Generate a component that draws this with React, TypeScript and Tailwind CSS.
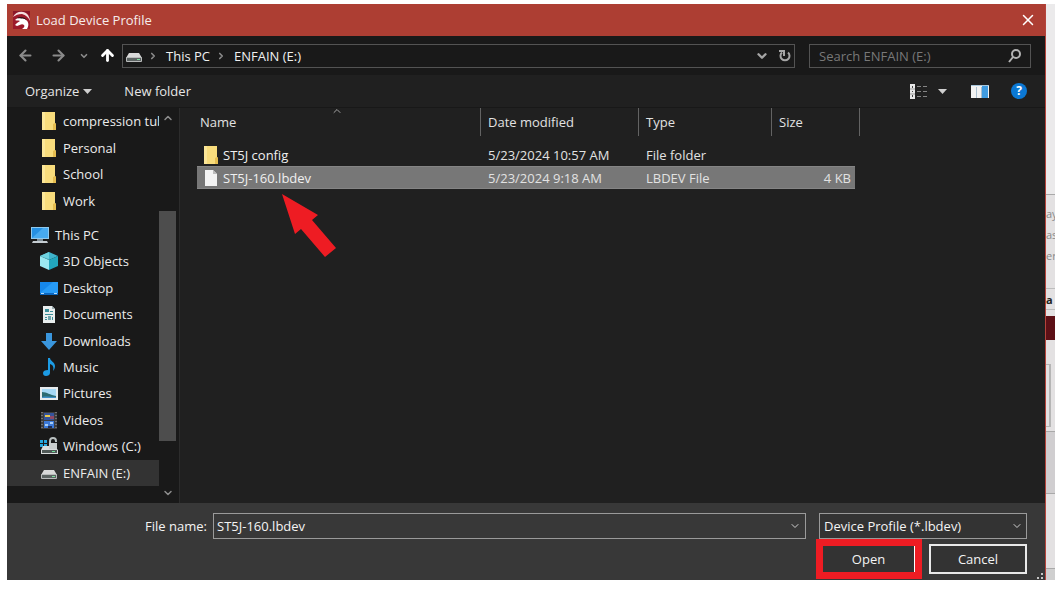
import type { ReactNode } from "react";
import { ArrowLeft, ArrowRight, ArrowUp, ChevronDown, ChevronRight, ChevronUp, X } from "lucide-react";

/* Icons */

function LogoIcon() {
  return (
    <svg width="17" height="18" viewBox="0 0 17 18">
      <rect width="17" height="18" fill="#9c1a2b" />
      <path d="M0 0h17v4L12 1H5L0 4z" fill="#8a1828" />
      <path d="M0 6C3 0 11-1 15 4c1 2 2 4 2 6-2-4-4-6-8-7-4 0-6 1-9 3z" fill="#f3dede" />
      <path d="M2 9c3-3 8-3 11 0 3 2 3 6 1 9H9c2-1 3-3 2-4-2-2-4 0-7 1l-2-1 2-2 3-2c-2-1-3 0-5-1z" fill="#fff" />
      <path d="M4 7c3-2 8-1 10 2-3-2-6-1-10-2z" fill="#2b1215" />
    </svg>
  );
}

function DriveIcon() {
  return (
    <svg width="16" height="16" viewBox="0 0 16 16">
      <path d="M3 5h10l3 5H0z" fill="#d9d9d9" />
      <rect y="9" width="16" height="5" rx="1" fill="#b9bbbb" />
      <rect x="1" y="10" width="14" height="3" fill="#5c6362" />
      <rect x="11" y="11" width="3" height="1" fill="#7fe0a0" />
    </svg>
  );
}

function FolderIcon() {
  return (
    <svg width="16" height="18" viewBox="0 0 16 18">
      <path d="M1 0h13v11l1 1v6H1z" fill="#f8dc7c" />
      <path d="M1 0h3v18H1z" fill="#fbe698" />
      <path d="M12 12l2-1 1 1v6h-3z" fill="#e5bd50" />
    </svg>
  );
}

function FileIcon() {
  return (
    <svg width="16" height="18" viewBox="0 0 16 18">
      <path d="M2 1h8l4 4v12H2z" fill="#f4f4f4" />
      <path d="M10 1l4 4h-4z" fill="#bdbdbd" />
    </svg>
  );
}

function PcIcon() {
  return (
    <svg width="18" height="18" viewBox="0 0 18 18">
      <rect width="18" height="12" y="1" fill="#8fc9ee" />
      <rect x="1" y="2" width="16" height="10" fill="#2590e3" />
      <path d="M1 12L12 2h5v10z" fill="#47aaf0" />
      <rect x="6" y="13" width="6" height="2" fill="#7d8b94" />
      <path d="M2 15h14l1 2H1z" fill="#c4ccd1" />
    </svg>
  );
}

function CubeIcon() {
  return (
    <svg width="18" height="18" viewBox="0 0 18 18">
      <path d="M9 0l9 4-9 4-9-4z" fill="#3eb3cb" />
      <path d="M0 4l9 4v10l-9-4z" fill="#9be9f1" />
      <path d="M18 4L9 8v10l9-4z" fill="#22a6bd" />
      <path d="M0 4l9-4v7z" fill="#6fd3e0" />
    </svg>
  );
}

function DesktopIcon() {
  return (
    <svg width="18" height="18" viewBox="0 0 18 18">
      <rect y="3" width="18" height="13" fill="#1687ea" />
      <path d="M0 14L13 3h5v11z" fill="#279bf6" />
      <path d="M0 14h18v2H0z" fill="#0b66be" />
      <path d="M1 14h3v1H1zM14 14h3v1h-3z" fill="#b6dcfb" />
    </svg>
  );
}

function DocumentIcon() {
  return (
    <svg width="18" height="18" viewBox="0 0 18 18">
      <path d="M3 1h9l3 3v14H3z" fill="#e9eeee" />
      <path d="M12 1l3 3h-3z" fill="#9fb0b3" />
      <path d="M5 4h4v3H5zM10 6h3v1h-3zM5 9h8v1H5zM5 12h2v1H5zM5 14h2v1H5zM12 12h1v3h-1z" fill="#3b8e99" />
      <rect x="8" y="11" width="3" height="4" fill="#6fa6ae" />
    </svg>
  );
}

function DownloadIcon() {
  return (
    <svg width="18" height="18" viewBox="0 0 18 18">
      <path d="M6 1h6v8h5l-8 9-8-9h5z" fill="#3a96dd" />
    </svg>
  );
}

function MusicIcon() {
  return (
    <svg width="18" height="18" viewBox="0 0 18 18">
      <path d="M8 0h2c0 3 5 4 5 8 0 2-1 4-2 5 1-4 0-6-3-7v9c0 2-2 3-4 3s-3-1-3-3 2-3 5-3z" fill="#1c9be4" />
    </svg>
  );
}

function PictureIcon() {
  return (
    <svg width="18" height="18" viewBox="0 0 18 18">
      <rect y="3" width="18" height="13" fill="#e6eaec" />
      <rect x="2" y="5" width="14" height="9" fill="#a5d8f5" />
      <path d="M2 8c5 0 8 3 14 4v2H2z" fill="#2c6b72" />
      <path d="M2 13c5-1 9 0 14 0v1H2z" fill="#3d8fc7" />
    </svg>
  );
}

function VideoIcon() {
  return (
    <svg width="18" height="18" viewBox="0 0 18 18">
      <rect x="1" y="1" width="16" height="17" fill="#3d3d3f" />
      <path d="M2 1v17M16 1v17" stroke="#a5a5a5" strokeWidth="1" strokeDasharray="1 2" />
      <rect x="4" y="2" width="10" height="7" fill="#35549c" />
      <path d="M5 4h5v2H5z" fill="#e8c84f" />
      <path d="M10 5h4v3h-4z" fill="#8f4a67" />
      <rect x="4" y="10" width="10" height="7" fill="#3c79d8" />
      <path d="M5 13h3v2H5zM10 11h3v2h-3z" fill="#a8cdf5" />
      <path d="M8 15h4v2H8z" fill="#1f2f56" />
    </svg>
  );
}

function LockedDriveIcon() {
  return (
    <svg width="18" height="18" viewBox="0 0 18 18">
      <path d="M0 3h3v3H0zM4 3h3v3H4zM0 7h3v3H0zM4 7h3v3H4z" fill="#25a6dd" />
      <path d="M10 6V4c0-4 6-4 6 0v1" fill="none" stroke="#b9c0c0" strokeWidth="2" />
      <rect x="9" y="6" width="8" height="6" fill="#c9cdcd" />
      <path d="M3 9h6v3h8l1 1v4H1v-4z" fill="#d9dcdc" />
      <rect x="2" y="13" width="15" height="3" fill="#4f5856" />
      <rect x="12" y="14" width="3" height="1" fill="#71e09a" />
    </svg>
  );
}

function RefreshIcon() {
  return (
    <svg width="12" height="13" viewBox="0 0 12 13" fill="none" stroke="currentColor" strokeWidth="2">
      <path d="M9 3.500A4.500 4.500 0 1 1 3 3.500" />
      <path d="M0 2h5v5" />
    </svg>
  );
}

function SearchIcon() {
  return (
    <svg width="14" height="14" viewBox="0 0 14 14" fill="none" stroke="#b4b4b4" strokeWidth="2">
      <circle cx="8" cy="5" r="4" />
      <path d="M5 8l-4 5" />
    </svg>
  );
}

function ViewIcon() {
  return (
    <svg width="18" height="15" viewBox="0 0 18 15">
      <rect width="5" height="15" fill="#e8e8e8" />
      <path d="M2 2h1v2H2zM2 7h1v1H2zM2 11h1v2H2z" fill="#444" />
      <path d="M0 5h5M0 10h5" stroke="#999" />
      <path d="M7 2.500h4M13 2.500h4M7 7.500h4M13 7.500h4M7 12.500h4M13 12.500h4" stroke="#858585" />
    </svg>
  );
}

function PreviewPaneIcon() {
  return (
    <svg width="18" height="13" viewBox="0 0 18 13">
      <rect width="18" height="13" fill="#f2f2f2" />
      <rect x="11" y="1" width="6" height="12" fill="#3f9be0" />
      <path d="M5.500 2v11M10.500 2v11" stroke="#a9bfd0" />
      <path d="M0 .5h18" stroke="#a8c6dc" />
    </svg>
  );
}

function CaretIcon() {
  return (
    <svg width="9" height="5" viewBox="0 0 9 5">
      <path d="M0 0h9L4.500 5z" fill="#cfcfcf" />
    </svg>
  );
}

/* Data */

type Place = { name: string; icon: ReactNode; selected?: boolean };

const folders = ["compression tub", "Personal", "School", "Work"];

const places: Place[] = [
  { name: "3D Objects", icon: <CubeIcon /> },
  { name: "Desktop", icon: <DesktopIcon /> },
  { name: "Documents", icon: <DocumentIcon /> },
  { name: "Downloads", icon: <DownloadIcon /> },
  { name: "Music", icon: <MusicIcon /> },
  { name: "Pictures", icon: <PictureIcon /> },
  { name: "Videos", icon: <VideoIcon /> },
  { name: "Windows (C:)", icon: <LockedDriveIcon /> },
  { name: "ENFAIN (E:)", icon: <DriveIcon />, selected: true },
];

const files = [
  { name: "ST5J config", date: "5/23/2024 10:57 AM", type: "File folder", size: "", icon: <FolderIcon />, selected: false },
  { name: "ST5J-160.lbdev", date: "5/23/2024 9:18 AM", type: "LBDEV File", size: "4 KB", icon: <FileIcon />, selected: true },
];

/* Sections */

function TitleBar() {
  return (
    <header className="flex h-8 items-center bg-[#ad3e33] pr-2 pl-1.5">
      <LogoIcon />
      <h1 className="ml-1.5 flex-1 text-[#f6eceb]">Load Device Profile</h1>
      <button aria-label="Close" className="text-white">
        <X size={18} strokeWidth={2} />
      </button>
    </header>
  );
}

function NavBar() {
  return (
    <nav className="flex h-[39px] items-center bg-[#191919] pr-3.5 pl-2.5">
      <button aria-label="Back" className="text-[#8b8b8b]">
        <ArrowLeft size={17} strokeWidth={3} />
      </button>
      <button aria-label="Forward" className="ml-4 text-[#8b8b8b]">
        <ArrowRight size={17} strokeWidth={3} />
      </button>
      <button aria-label="Recent locations" className="ml-3 text-[#8b8b8b]">
        <ChevronDown size={10} strokeWidth={4} />
      </button>
      <button aria-label="Up" className="ml-2.5 text-white">
        <ArrowUp size={17} strokeWidth={4} />
      </button>
      <div className="ml-1.5 flex h-6 flex-1 items-center border border-[#535353] px-[3px] text-[#f0f0f0]">
        <DriveIcon />
        <ChevronRight size={10} strokeWidth={4} className="ml-1.5 text-[#8b8b8b]" />
        <a href="#" className="ml-2">This PC</a>
        <ChevronRight size={10} strokeWidth={4} className="ml-1.5 text-[#8b8b8b]" />
        <a href="#" className="ml-2">ENFAIN (E:)</a>
        <button aria-label="Previous locations" className="ml-auto text-[#a5a5a5]">
          <ChevronDown size={14} strokeWidth={4} />
        </button>
        <button aria-label="Refresh" className="ml-2.5 text-[#a5a5a5]">
          <RefreshIcon />
        </button>
      </div>
      <label className="ml-3.5 flex h-6 w-[222px] items-center border border-[#535353] pr-2 pl-[9px]">
        <input
          type="text"
          aria-label="Search"
          placeholder="Search ENFAIN (E:)"
          className="min-w-0 flex-1 bg-transparent text-white outline-none placeholder:text-[#787878]"
        />
        <SearchIcon />
      </label>
    </nav>
  );
}

function Toolbar() {
  return (
    <div className="flex h-[33px] items-center border-b border-[#181818] bg-[#202020] pr-[18px] pl-[18px] text-[#e6e6e6]">
      <button className="flex items-center gap-1">
        Organize <CaretIcon />
      </button>
      <button className="ml-8">New folder</button>
      <button aria-label="Change view" className="ml-auto flex items-center gap-2.5">
        <ViewIcon />
        <CaretIcon />
      </button>
      <button aria-label="Preview pane" className="ml-6">
        <PreviewPaneIcon />
      </button>
      <button aria-label="Help" className="ml-[22px] size-4 rounded-full bg-[#0b78d4] text-xs leading-4 font-bold text-white">
        ?
      </button>
    </div>
  );
}

function Sidebar() {
  return (
    <aside className="flex w-[173px] shrink-0 border-r border-[#2c2c2c] bg-[#191919] pr-[3px] text-[#ececec]">
      <div className="flex min-w-0 flex-1 flex-col gap-2 pb-[17px]">
        <ul className="flex flex-[4] flex-col">
          {folders.map((name) => (
            <li key={name} className="flex min-h-[26px] flex-1 items-center gap-1.5 overflow-hidden pl-[34px] whitespace-nowrap">
              <span className="shrink-0"><FolderIcon /></span>
              {name}
            </li>
          ))}
        </ul>
        <ul className="flex flex-[10] flex-col">
          <li className="flex min-h-[26px] flex-1 items-center gap-1.5 pl-6">
            <PcIcon />
            This PC
          </li>
          {places.map((place) => (
            <li
              key={place.name}
              className={`flex min-h-[26px] flex-1 items-center pl-[33px] ${place.selected ? "bg-[#333333]" : ""}`}
            >
              <span className="mr-[5px] flex w-[18px] justify-center">{place.icon}</span>
              {place.name}
            </li>
          ))}
        </ul>
      </div>
      <div className="flex w-[17px] flex-col items-center text-[#8d8d8d]">
        <ChevronUp size={12} strokeWidth={3} className="mt-1" />
        <div className="mt-[87px] mb-[46px] w-full flex-1 bg-[#4d4d4d]" />
        <ChevronDown size={12} strokeWidth={3} className="mb-1" />
      </div>
    </aside>
  );
}

function FileList() {
  return (
    <main className="relative min-w-0 flex-1 bg-[#202020] pl-[17px] text-[#e2e2e2]">
      <table className="w-[663px] table-fixed border-separate border-spacing-0 text-left">
        <colgroup>
          <col className="w-[284px]" />
          <col className="w-[158px]" />
          <col className="w-[133px]" />
          <col className="w-[83px]" />
          <col className="w-[5px]" />
        </colgroup>
        <thead>
          <tr className="h-7">
            <th className="relative border-r border-[#636363] pl-[3px] font-normal">
              Name
              <ChevronUp size={12} className="absolute top-[-3px] left-[134px] text-[#a5a5a5]" />
            </th>
            <th className="border-r border-[#636363] pl-[7px] font-normal">Date modified</th>
            <th className="border-r border-[#636363] pl-[7px] font-normal">Type</th>
            <th colSpan={2} className="border-r border-[#636363] pl-[7px] font-normal">Size</th>
          </tr>
        </thead>
        <tbody>
          <tr className="h-[7px]" />
          {files.map((file) => {
            const cell = file.selected ? "bg-[#777777] border-y border-[#858585]" : "";
            return (
              <tr key={file.name} className="h-[23px]">
                <td className={cell}>
                  <div className="flex items-center gap-1 pl-[6px] text-[#f0f0f0]">
                    {file.icon}
                    {file.name}
                  </div>
                </td>
                <td className={`pl-[7px] ${cell}`}>{file.date}</td>
                <td className={`pl-[7px] ${cell}`}>{file.type}</td>
                <td className={`pr-1 text-right ${cell}`}>{file.size}</td>
                <td />
              </tr>
            );
          })}
        </tbody>
      </table>
      {/* pointer to the selected file */}
      <svg width="54" height="64" viewBox="0 0 54 64" className="absolute top-[86px] left-[102px]">
        <path d="M0 0l36 21-6 5 24 28-11 9-24-28-6 5z" fill="#ee1c23" />
      </svg>
    </main>
  );
}

function Footer() {
  return (
    <footer className="flex h-[77px] gap-[13px] bg-[#383838] pt-2.5 pr-[18px] text-[#f4f4f4]">
      <div className="flex h-[26px] flex-1 items-center">
        <label htmlFor="file-name" className="w-[206px] pr-1.5 text-right">File name:</label>
        <div className="flex h-full flex-1 items-center border border-[#9a9a9a] pr-1 pl-[3px]">
          <input id="file-name" type="text" defaultValue="ST5J-160.lbdev" className="min-w-0 flex-1 bg-transparent outline-none" />
          <ChevronDown size={12} className="text-[#d0d0d0]" />
        </div>
      </div>
      <div className="flex w-[208px] flex-col gap-[5px]">
        <div className="relative">
          <select aria-label="File type" className="block h-[26px] w-full appearance-none border border-[#9a9a9a] bg-[#333333] pl-1 outline-none">
            <option>Device Profile (*.lbdev)</option>
          </select>
          <ChevronDown size={12} className="pointer-events-none absolute top-[7px] right-1 text-[#d0d0d0]" />
        </div>
        <div className="flex items-center justify-between pl-1">
          <div className="relative">
            <button className="block h-[26px] w-[92px] border-r border-white bg-[#333333]">Open</button>
            <span className="pointer-events-none absolute -inset-[7px] border-[7px] border-[#ee1c23]" />
          </div>
          <button className="h-[30px] w-[98px] border-2 border-[#e9e9e9] bg-[#333333]">Cancel</button>
        </div>
      </div>
    </footer>
  );
}

/* Sliver of the window that lies behind the dialog */
function BackgroundWindow() {
  return (
    <div className="flex w-[9px] shrink-0 flex-col overflow-hidden bg-[#e3e1e2] text-[11px] leading-[21px] text-[#8a8a8a]">
      <div className="h-[191px] border-b border-[#a9a9a9] bg-[#ebeaeb]" />
      <div className="h-[94px] border-b border-[#bdbdbd] pt-2">
        <p>ay</p>
        <p>as</p>
        <p>er</p>
      </div>
      <div className="h-[21px] border-b border-[#bdbdbd] font-bold text-[#222222]">a</div>
      <div className="mt-1.5 h-6 bg-[#5d1016]" />
      <div className="mt-6 mr-1 h-[63px] border-y border-r-2 border-[#b5b5b5]" />
      <div className="mt-1 h-[63px] border-y border-[#a9a9a9] bg-[#d0ced0]" />
      <div className="flex-1" />
      <div className="h-3 border-t border-[#a9a9a9] bg-[#cfcfcf]" />
    </div>
  );
}

export default function App() {
  return (
    <div className="flex min-h-screen bg-white pt-1 pb-[11px] pl-[7px] font-['Open_Sans','Noto_Sans',sans-serif] text-[13px] leading-5">
      <div className="relative flex min-w-0 flex-1 flex-col border-r border-[#b5443c]">
        <TitleBar />
        <NavBar />
        <Toolbar />
        <div className="flex flex-1">
          <Sidebar />
          <FileList />
        </div>
        <Footer />
        <svg width="7" height="7" viewBox="0 0 7 7" className="absolute right-0.5 bottom-0" fill="#c4c4c4">
          <path d="M5 0h2v2H5zM5 4h2v2H5zM1 4h2v2H1z" />
        </svg>
      </div>
      <BackgroundWindow />
    </div>
  );
}
